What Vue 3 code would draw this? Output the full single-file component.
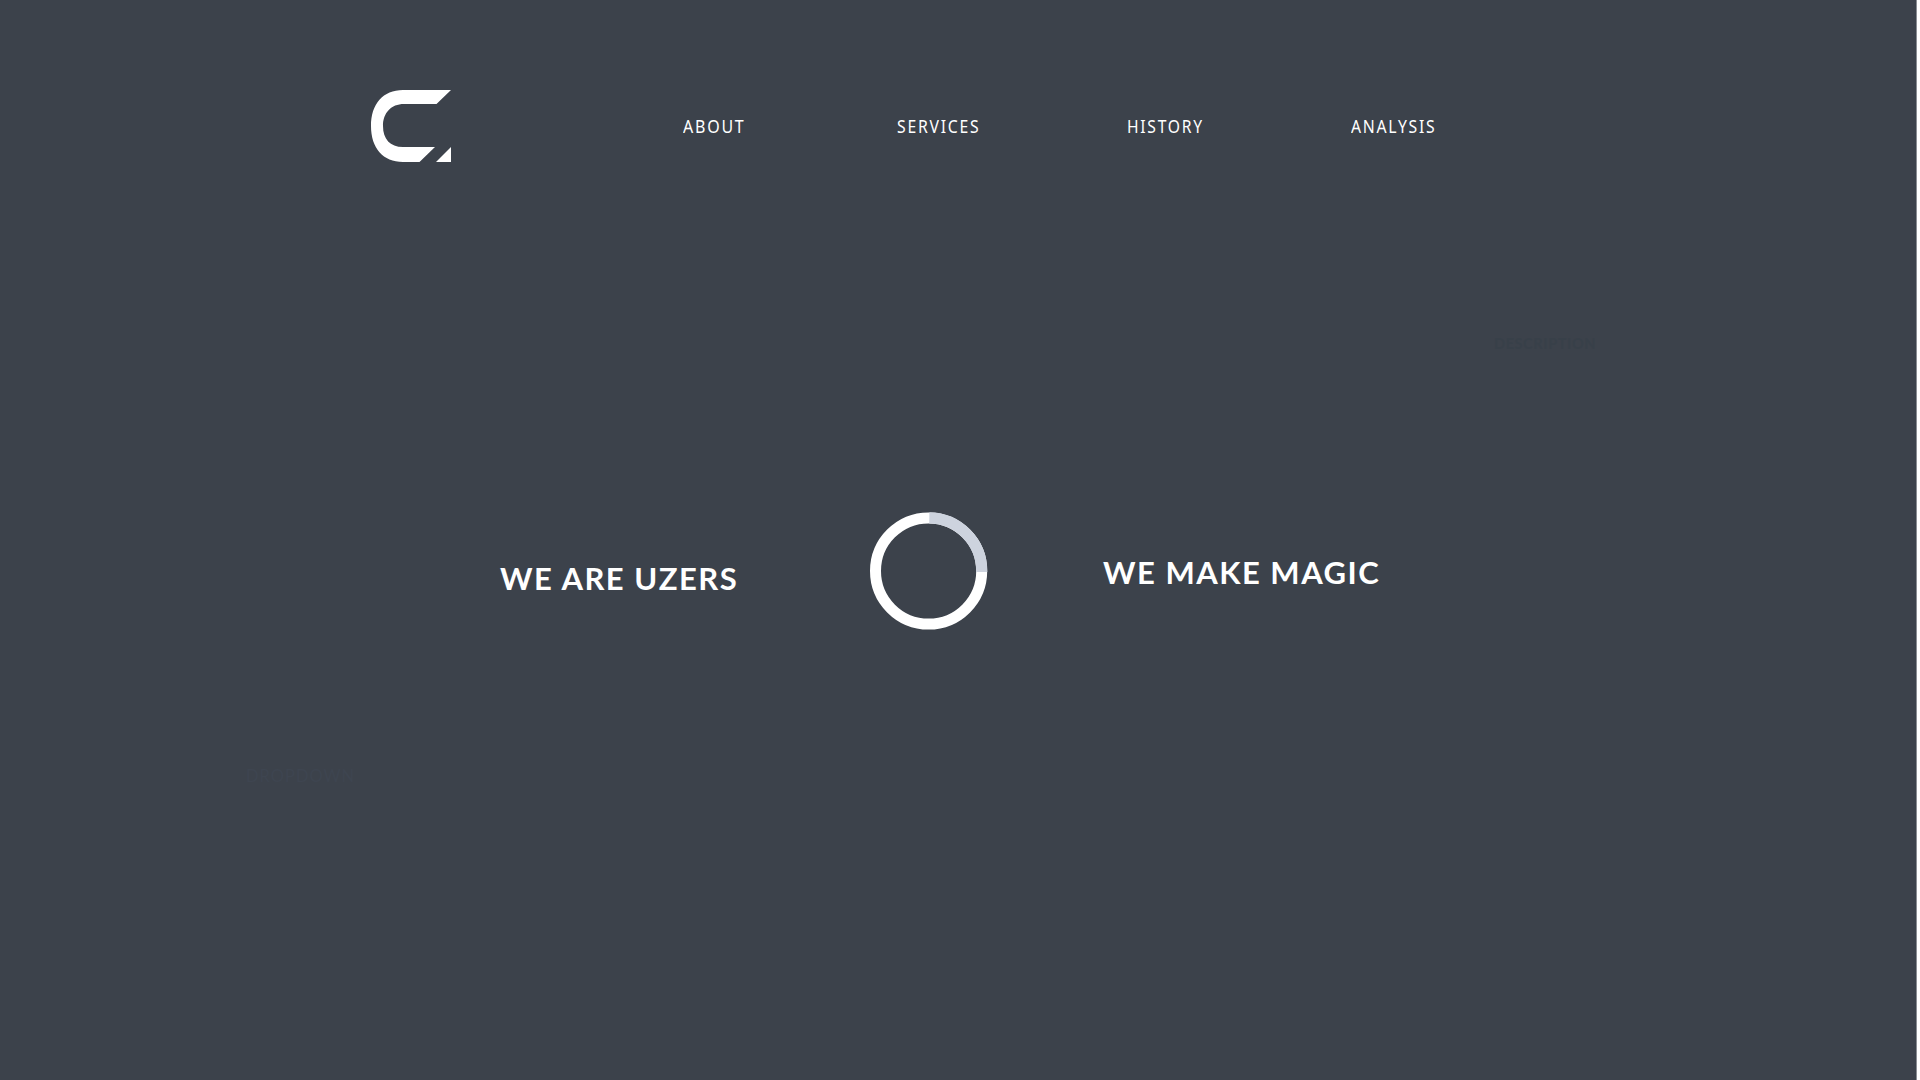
<script setup>
const links = [
  { label: 'ABOUT', id: 'about' },
  { label: 'SERVICES', id: 'services' },
  { label: 'HISTORY', id: 'history' },
  { label: 'ANALYSIS', id: 'analysis' },
]
</script>

<template>
  <div class="page">
    <header class="header">
      <svg class="logo" viewBox="0 0 80 72" width="80" height="72" aria-label="Logo">
        <path d="M80 0H32C12 0 0 14 0 36S12 72 32 72H48.500L64 57H32C19 57 12 49 12 36S20 14 33 14H65.500Z" />
        <path d="M80 57V72H65Z" />
      </svg>
      <nav class="nav">
        <a v-for="l in links" :key="l.id" :class="['link', l.id]"><span>{{ l.label }}</span></a>
      </nav>
    </header>
    <div class="faint description">DESCRIPTION</div>
    <main class="hero">
      <h1 class="title left">WE ARE UZERS</h1>
      <svg class="ring" viewBox="0 0 118 118" width="118" height="118">
        <circle cx="58.600" cy="59" r="53.100" fill="none" stroke="#fff" stroke-width="11" />
        <path d="M59.300 5.900A53.100 53.100 0 0 1 111.700 60" fill="none" stroke="#cdd3de" stroke-width="11.200" />
      </svg>
      <h1 class="title right">WE MAKE MAGIC</h1>
    </main>
    <div class="faint dropdown">DROPDOWN</div>
  </div>
</template>

<style>
body {
  margin: 0;
  background: #fff;
  overflow: hidden;
}
</style>

<style scoped>
.page {
  box-sizing: border-box;
  width: 1917px;
  height: 1080px;
  background: #3c424b;
  border-right: 1px solid #8a8d93;
  color: #fff;
  font-family: Lato, sans-serif;
  display: flex;
  flex-direction: column;
}
.header {
  display: flex;
  align-items: flex-start;
  padding: 90px 0 0 371px;
  height: 72px;
}
.logo { fill: #fff; flex: none; }
.nav {
  display: flex;
  margin: 24px 0 0 232px;
  font: 18px/24px "Noto Sans", sans-serif;
}
.link { display: block; }
.link span {
  display: inline-block;
  letter-spacing: 2px;
  transform: scaleX(0.875);
  transform-origin: 0 50%;
}
.about { width: 214px; }
.about span { transform: scaleX(0.888); }
.services { width: 230px; }
.history { width: 224px; }
.history span { transform: scaleX(0.868); }
.faint {
  font-size: 14.500px;
  line-height: 20px;
  letter-spacing: 0.600px;
  color: #384049;
}
.description {
  margin: 172px 0 0 1494px;
  font-weight: 700;
}
.hero {
  display: flex;
  align-items: flex-start;
  margin-top: 158px;
  padding-left: 500px;
  height: 118px;
}
.title {
  margin: 0;
  font-size: 31px;
  line-height: 40px;
  font-weight: 700;
  letter-spacing: 1.500px;
  white-space: nowrap;
}
.left { width: 369.500px; padding-top: 46px; }
.ring { flex: none; }
.right { margin-left: 115.500px; padding-top: 40px; }
.dropdown {
  margin: 136px 0 0 246px;
  font-size: 16.500px;
  letter-spacing: 1px;
  color: #3e4550;
}
</style>
